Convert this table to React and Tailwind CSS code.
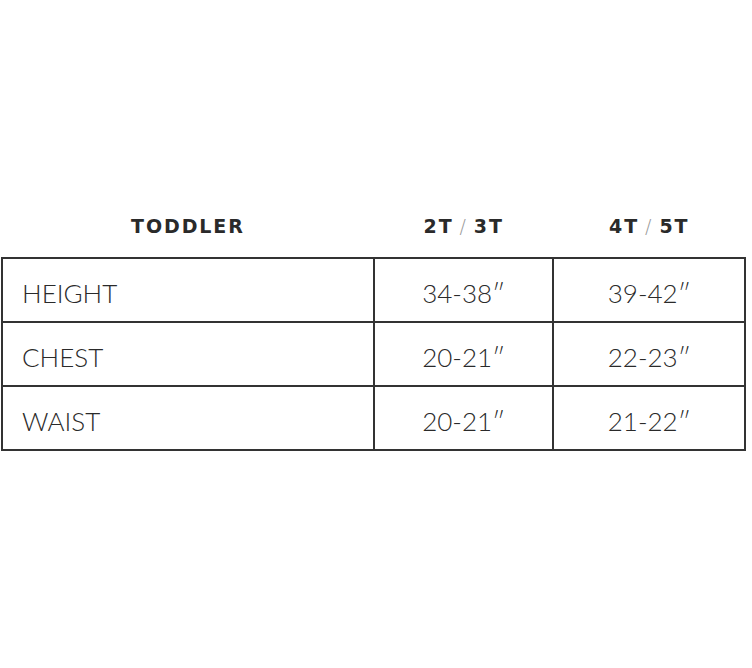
const rows = [
  ['HEIGHT', '34-38″', '39-42″'],
  ['CHEST', '20-21″', '22-23″'],
  ['WAIST', '20-21″', '21-22″'],
];

function Head({ a, b }) {
  return (
    <span>
      {a}
      <span className="font-light text-[#9a9a9a] mx-[6px]">/</span>
      {b}
    </span>
  );
}

export default function App() {
  return (
    <div className="w-[752px] h-[668px] bg-white pt-[210px] pl-[1px]">
      <table
        className="w-[745px] border-collapse text-[#2a2a2a]"
        style={{ fontFamily: 'Lato, "Open Sans", sans-serif' }}
      >
        <colgroup>
          <col className="w-[373px]" />
          <col className="w-[180px]" />
          <col className="w-[192px]" />
        </colgroup>
        <thead>
          <tr
            className="h-[34px] text-[19px] tracking-[0.1em] text-[#2a2a2a]"
            style={{ fontFamily: '"DejaVu Sans", sans-serif' }}
          >
            <th className="align-top font-bold pt-[2px]">TODDLER</th>
            <th className="align-top font-bold pt-[2px]"><Head a="2T" b="3T" /></th>
            <th className="align-top font-bold pt-[2px]"><Head a="4T" b="5T" /></th>
          </tr>
          <tr className="h-[14px]"><th colSpan={3}></th></tr>
        </thead>
        <tbody className="text-[26px] font-light">
          {rows.map((r) => (
            <tr key={r[0]} className="h-[64px]">
              <td className="border-2 border-[#333] pl-[19px] pt-[6px]">{r[0]}</td>
              <td className="border-2 border-[#333] text-center pt-[6px]">{r[1]}</td>
              <td className="border-2 border-[#333] text-center pt-[6px]">{r[2]}</td>
            </tr>
          ))}
        </tbody>
      </table>
    </div>
  );
}
